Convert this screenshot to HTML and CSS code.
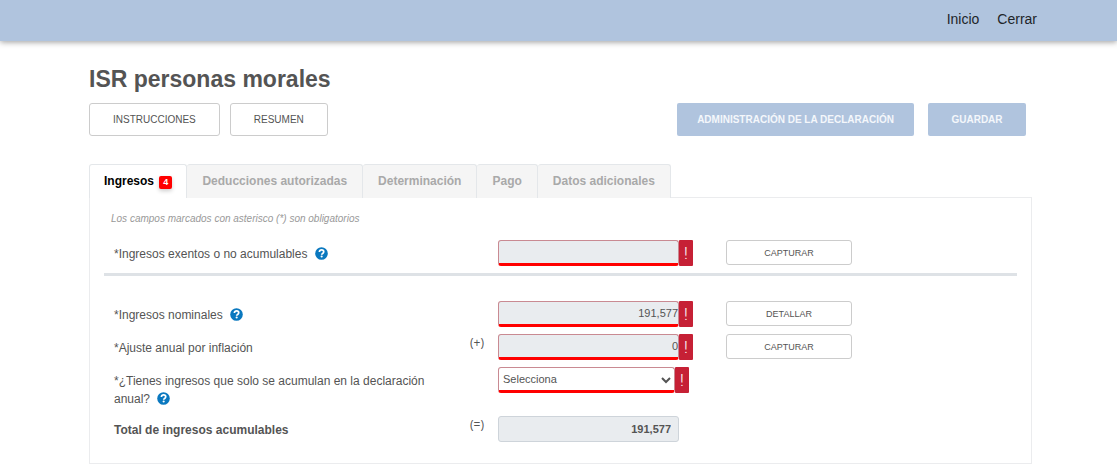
FILE: index.html
```html
<!DOCTYPE html>
<html lang="es">
<head>
<meta charset="utf-8">
<meta name="viewport" content="width=device-width, initial-scale=1">
<title>ISR personas morales</title>
<link rel="stylesheet" href="styles.css">
</head>
<body>
<svg class="sprite" aria-hidden="true">
  <symbol id="help" viewBox="0 0 512 512">
    <circle cx="256" cy="256" r="248" fill="#0a78bf"/>
    <path d="M172 196c6-52 42-80 88-80 48 0 84 28 84 74 0 62-80 62-80 112" fill="none" stroke="#fff" stroke-width="68"/>
    <circle cx="262" cy="376" r="42" fill="#fff"/>
  </symbol>
</svg>
<header class="topbar">
  <nav class="topnav">
    <a href="#">Inicio</a>
    <a href="#">Cerrar</a>
  </nav>
</header>
<main class="page">
  <h1 class="title">ISR personas morales</h1>
  <div class="toolbar">
    <button type="button" class="btn btn-top">INSTRUCCIONES</button>
    <button type="button" class="btn btn-top">RESUMEN</button>
    <div class="toolbar-end">
      <button type="button" class="btn btn-primary">ADMINISTRACIÓN DE LA DECLARACIÓN</button>
      <button type="button" class="btn btn-primary">GUARDAR</button>
    </div>
  </div>
  <div class="tabs" role="tablist">
    <button type="button" role="tab" aria-selected="true" class="tab tab-active">Ingresos <span class="count">4</span></button>
    <button type="button" role="tab" aria-selected="false" class="tab">Deducciones autorizadas</button>
    <button type="button" role="tab" aria-selected="false" class="tab">Determinación</button>
    <button type="button" role="tab" aria-selected="false" class="tab">Pago</button>
    <button type="button" role="tab" aria-selected="false" class="tab">Datos adicionales</button>
    <span class="tabs-line" role="presentation"></span>
  </div>
  <form class="panel">
    <p class="note">Los campos marcados con asterisco (*) son obligatorios</p>
    <div class="row">
      <label class="label" for="exentos">*Ingresos exentos o no acumulables <svg class="help"><use href="#help"/></svg></label>
      <div class="field"><input id="exentos" class="control invalid" type="text" readonly><span class="mark">!</span></div>
      <button type="button" class="btn btn-row">CAPTURAR</button>
    </div>
    <hr class="rule">
    <div class="rows">
      <div class="row">
        <label class="label" for="nominales">*Ingresos nominales <svg class="help"><use href="#help"/></svg></label>
        <div class="field"><input id="nominales" class="control invalid" type="text" value="191,577" readonly><span class="mark">!</span></div>
        <button type="button" class="btn btn-row">DETALLAR</button>
      </div>
      <div class="row">
        <label class="label" for="ajuste">*Ajuste anual por inflación</label>
        <span class="sign">(+)</span>
        <div class="field"><input id="ajuste" class="control invalid" type="text" value="0" readonly><span class="mark">!</span></div>
        <button type="button" class="btn btn-row">CAPTURAR</button>
      </div>
      <div class="row">
        <label class="label" for="acumulan">*¿Tienes ingresos que solo se acumulan en la declaración anual? <svg class="help"><use href="#help"/></svg></label>
        <div class="field field-select"><select id="acumulan" class="control invalid select"><option>Selecciona</option><option>Sí</option><option>No</option></select><span class="mark">!</span></div>
      </div>
      <div class="row row-total">
        <label class="label" for="total">Total de ingresos acumulables</label>
        <span class="sign">(=)</span>
        <div class="field field-total"><input id="total" class="control total" type="text" value="191,577" readonly></div>
      </div>
    </div>
  </form>
</main>
</body>
</html>
```
FILE: styles.css
```css
* {
  box-sizing: border-box;
}

body {
  margin: 0;
  background: #fff;
  color: #545454;
  font-family: "Liberation Sans", Arial, sans-serif;
  font-size: 12px;
  line-height: 18px;
}

button,
input,
select {
  font-family: inherit;
}

.sprite {
  display: none;
}

.topbar {
  padding: 10px 80px 13px;
  background: #b0c4de;
  box-shadow: 0 1px 6px rgba(0, 0, 0, 0.4);
}

.topnav {
  display: flex;
  justify-content: flex-end;
  gap: 18px;
}

.topnav a {
  color: #212529;
  font-size: 14px;
  text-decoration: none;
}

.page {
  padding: 25px 85px 0 89px;
}

.title {
  margin: 0;
  font-size: 23px;
  line-height: 26px;
}

.toolbar {
  display: flex;
  gap: 10px;
  margin-top: 11px;
  padding-right: 6px;
}

.toolbar-end {
  display: flex;
  gap: 14px;
  margin-left: auto;
}

.btn {
  border: 1px solid #ccc;
  border-radius: 3px;
  background: #fff;
  color: #545454;
  font-size: 9px;
}

.btn-top {
  height: 33px;
  padding: 0 23px;
  font-size: 10px;
}

.btn-primary {
  min-width: 98px;
  height: 33px;
  padding: 0 20px;
  border: 0;
  border-radius: 2px;
  background: #b0c4de;
  color: #f4f7fb;
  font-size: 10px;
  font-weight: bold;
}

.tabs {
  display: flex;
  margin-top: 28px;
}

.tab {
  height: 34px;
  padding: 0 15px 1px;
  border: 1px solid #e4e7ea;
  border-bottom: 0;
  border-left-width: 0;
  border-radius: 3px 3px 0 0;
  background: #f5f5f5;
  color: #a9a9a9;
  font-size: 12px;
  font-weight: bold;
}

.tab-active {
  padding: 0 14px;
  border-left-width: 1px;
  background: #fff;
  color: #000;
}

.tabs-line {
  flex: 1;
  border-bottom: 1px solid #ebecee;
}

.count {
  display: inline-block;
  margin-left: 2px;
  padding: 0 4px;
  border-radius: 2px;
  background: #f00;
  box-shadow: 0 2px 4px rgba(0, 0, 0, 0.2);
  color: #fff;
  font-size: 9px;
  line-height: 13px;
}

.panel {
  padding: 12px 14px 21px;
  border: 1px solid #ebecee;
  border-top: 0;
}

.note {
  margin: 0 0 12px 7px;
  color: #999;
  font-size: 10px;
  font-style: italic;
  line-height: 18px;
}

.row {
  display: grid;
  grid-template-columns: 366fr 28fr 195fr 33fr 126fr 165fr;
  align-items: start;
  min-height: 26px;
}

.label {
  grid-column: 1;
  padding: 5px 32px 0 10px;
}

.help {
  width: 13px;
  height: 13px;
  margin-left: 4px;
  vertical-align: -2px;
}

.sign {
  grid-column: 2;
  font-family: "Open Sans", sans-serif;
}

.field {
  display: flex;
  grid-column: 3;
}

.field-select {
  padding-right: 4px;
}

.field-total {
  padding-right: 14px;
}

.control {
  flex: 1;
  min-width: 0;
  height: 26px;
  padding: 0;
  border: 1px solid #ced4da;
  border-radius: 3px;
  background: #e9ecef;
  color: #545454;
  font-size: 11px;
  text-align: right;
}

.invalid {
  border-color: #c98a92;
  border-bottom: 3px solid #f00;
}

.select {
  background: #fff;
  text-align: left;
}

.total {
  padding-right: 7px;
  font-weight: bold;
}

.mark {
  width: 14px;
  height: 26px;
  border-radius: 1px;
  background: #c62035;
  color: #fff;
  font-family: Roboto, sans-serif;
  font-size: 17px;
  font-weight: 300;
  line-height: 26px;
  text-align: center;
}

.btn-row {
  grid-column: 5;
  height: 25px;
  padding: 0;
}

.rule {
  height: 3px;
  margin: 7px 0 25px;
  border: 0;
  background: #dee2e6;
}

.rows {
  display: grid;
  gap: 7px;
}

.row-total {
  padding-top: 1px;
  font-weight: bold;
}

.row-total .sign {
  font-weight: normal;
}
```
